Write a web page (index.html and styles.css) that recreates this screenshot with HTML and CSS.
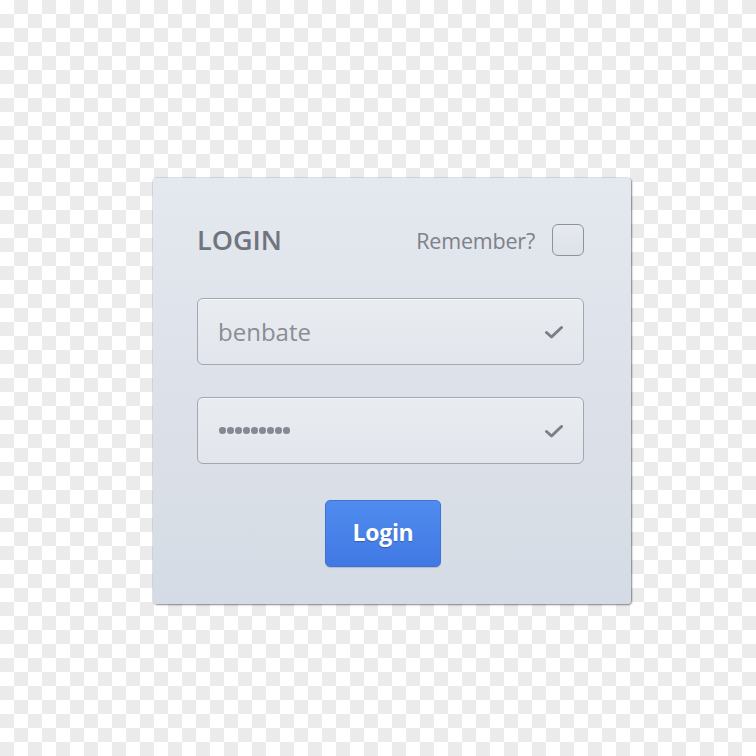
FILE: index.html
```html
<!DOCTYPE html>
<html>
<head>
<meta charset="utf-8">
<link rel="stylesheet" href="styles.css">
</head>
<body>
<div class="page">
  <form class="card">
    <div class="head">
      <h1 class="title">LOGIN</h1>
      <label class="remember">
        <span>Remember?</span>
        <span class="box"></span>
      </label>
    </div>
    <div class="field">
      <span class="value">benbate</span>
      <svg class="check" viewBox="0 0 18 14" width="18" height="14"><path d="M1.5 7.5 L6.5 12 L16.5 2.5" fill="none" stroke="#7b7f87" stroke-width="3" stroke-linecap="round" stroke-linejoin="round"/></svg>
    </div>
    <div class="field pw">
      <span class="dots"><i></i><i></i><i></i><i></i><i></i><i></i><i></i><i></i><i></i></span>
      <svg class="check" viewBox="0 0 18 14" width="18" height="14"><path d="M1.5 7.5 L6.5 12 L16.5 2.5" fill="none" stroke="#7b7f87" stroke-width="3" stroke-linecap="round" stroke-linejoin="round"/></svg>
    </div>
    <div class="actions">
      <button type="button" class="btn">Login</button>
    </div>
  </form>
</div>
</body>
</html>
```
FILE: styles.css
```css
html, body {
  margin: 0;
  padding: 0;
}
body {
  width: 756px;
  height: 756px;
  background-color: #ffffff;
  background-image: conic-gradient(#ebebeb 0 25%, #ffffff 0 50%, #ebebeb 0 75%, #ffffff 0);
  background-size: 28px 28px;
  background-position: 0 0;
  font-family: "Open Sans", "Noto Sans", sans-serif;
}
.page {
  padding: 178px 0 0 153px;
}
.card {
  box-sizing: border-box;
  width: 478px;
  height: 426px;
  margin: 0;
  padding: 46px 47px 0 44px;
  border-radius: 4px;
  background: linear-gradient(#e4e8ef, #d5dbe4);
  box-shadow: 1px 1px 2px rgba(0,0,0,0.4), 0 0 0 1px rgba(160,166,176,0.3);
  display: flex;
  flex-direction: column;
}
.head {
  height: 32px;
  display: flex;
  align-items: center;
  justify-content: space-between;
  margin-bottom: 42px;
}
.title {
  margin: 0;
  font-size: 27px;
  font-weight: 600;
  color: #70747c;
  letter-spacing: 0;
  line-height: 32px;
}
.remember {
  display: flex;
  align-items: center;
  gap: 17px;
  font-size: 21.5px;
  color: #7d8189;
  letter-spacing: -0.2px;
}
.box {
  box-sizing: border-box;
  width: 32px;
  height: 32px;
  border: 1px solid #8d929b;
  border-radius: 6px;
  background: linear-gradient(#e6e9ef, #dde1e8);
}
.field {
  box-sizing: border-box;
  height: 67px;
  border: 1px solid #a3a7af;
  border-radius: 6px;
  background: linear-gradient(#e9ecf1, #e2e6ec);
  box-shadow: inset 0 1px 0 rgba(255,255,255,0.5);
  display: flex;
  align-items: center;
  justify-content: space-between;
  padding: 0 20px 0 20px;
}
.field.pw {
  margin-top: 32px;
}
.value {
  font-size: 24px;
  color: #8a8d94;
  letter-spacing: 0;
}
.dots {
  display: flex;
  gap: 1.5px;
  margin-left: 1px;
}
.dots i {
  width: 6.5px;
  height: 6.5px;
  border-radius: 50%;
  background: #858991;
}
.check {
  display: block;
}
.actions {
  display: flex;
  justify-content: center;
  margin-top: 36px;
  padding-right: 15px;
}
.btn {
  width: 116px;
  height: 67px;
  border: 1px solid #3f74d6;
  border-radius: 5px;
  background: linear-gradient(#4f8cee, #4179e4);
  color: #ffffff;
  font-family: "Open Sans", "Noto Sans", sans-serif;
  font-size: 23px;
  font-weight: 700;
  letter-spacing: -0.3px;
  text-shadow: 0 1px 1px rgba(0,0,0,0.25);
  padding: 0 0 4px;
  box-shadow: 0 1px 1px rgba(0,0,0,0.15);
}
```
